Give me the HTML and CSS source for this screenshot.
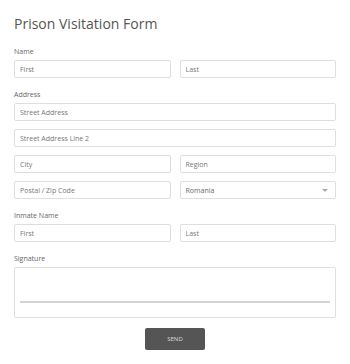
FILE: index.html
```html
<!DOCTYPE html>
<html lang="en">
<head>
    <meta charset="UTF-8">
    <title>Prison Visitation Form</title>
    <link rel="stylesheet" href="styles.css">
</head>
<body>
    <form class="form">
        <h1 class="title">Prison Visitation Form</h1>

        <div class="field">
            <label class="label">Name</label>
            <div class="row">
                <input class="input" placeholder="First">
                <input class="input" placeholder="Last">
            </div>
        </div>

        <div class="field">
            <label class="label">Address</label>
            <input class="input" placeholder="Street Address">
            <input class="input" placeholder="Street Address Line 2">
            <div class="row">
                <input class="input" placeholder="City">
                <input class="input" placeholder="Region">
            </div>
            <div class="row">
                <input class="input" placeholder="Postal / Zip Code">
                <div class="select">
                    <span>Romania</span>
                    <span class="caret"></span>
                </div>
            </div>
        </div>

        <div class="field">
            <label class="label">Inmate Name</label>
            <div class="row">
                <input class="input" placeholder="First">
                <input class="input" placeholder="Last">
            </div>
        </div>

        <div class="field">
            <label class="label">Signature</label>
            <div class="signature">
                <div class="signature-line"></div>
            </div>
        </div>

        <div class="actions">
            <button type="button" class="send-button">SEND</button>
        </div>
    </form>
</body>
</html>
```

FILE: styles.css
```css
body {
    margin: 0;
    font-family: "Open Sans", "Liberation Sans", sans-serif;
    background-color: #fff;
}

.form {
    display: flex;
    flex-direction: column;
    padding: 14px 14px 0;
}

.title {
    font-size: 14px;
    font-weight: 400;
    color: #555;
    margin: 0 0 13px;
    line-height: 20px;
}

/* 表单字段 */
.field {
    display: flex;
    flex-direction: column;
    gap: 8px;
    margin-bottom: 12px;
}

.label {
    font-size: 7px;
    color: #666;
    line-height: 10px;
    margin-bottom: -5px;
}

.row {
    display: flex;
    gap: 9px;
}

.row > .input,
.row > .select {
    flex: 1;
    min-width: 0;
}

.input,
.select {
    box-sizing: border-box;
    height: 18px;
    padding: 0 5px;
    border: 1px solid #dedede;
    border-radius: 2px;
    font-family: inherit;
    font-size: 7px;
    color: #666;
    background: #fff;
    outline: none;
}

.input::placeholder {
    color: #777;
}

.select {
    display: flex;
    align-items: center;
    justify-content: space-between;
}

.caret {
    width: 0;
    height: 0;
    margin-right: 2px;
    border-left: 3px solid transparent;
    border-right: 3px solid transparent;
    border-top: 3px solid #aaa;
}

/* 签名区域 */
.signature {
    box-sizing: border-box;
    height: 51px;
    border: 1px solid #dedede;
    border-radius: 2px;
    display: flex;
    flex-direction: column;
    justify-content: flex-end;
    padding: 0 5px 14px;
}

.signature-line {
    height: 2px;
    background-color: #d3d3d3;
}

.actions {
    display: flex;
    justify-content: center;
    margin-top: -2px;
}

.send-button {
    width: 60px;
    height: 22px;
    border: none;
    border-radius: 2px;
    background-color: #555;
    color: #ddd;
    font-family: inherit;
    font-size: 6px;
    cursor: pointer;
}
```
